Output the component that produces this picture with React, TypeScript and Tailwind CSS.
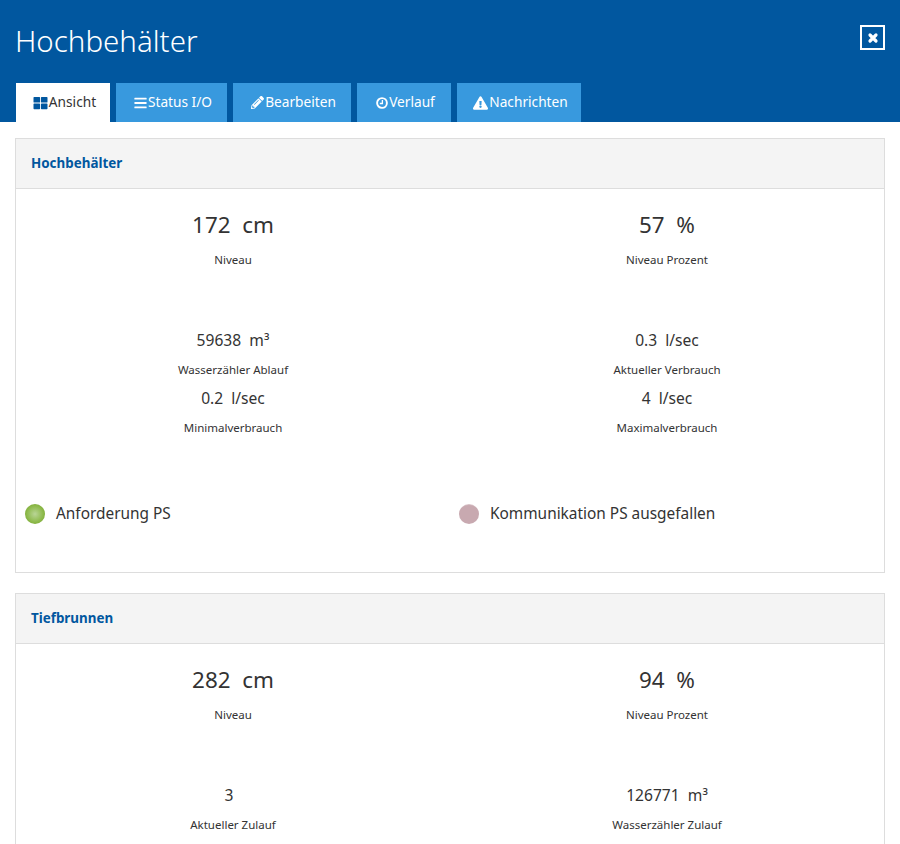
import { FaExclamationTriangle, FaPencilAlt, FaBars, FaThLarge } from 'react-icons/fa';
import type { ReactNode } from 'react';

const ClockIcon = () => (
  <svg viewBox="0 0 12 12" className="w-[12px] h-[12px]" fill="none" stroke="currentColor">
    <circle cx="6" cy="6" r="4.9" strokeWidth="1.9" />
    <path d="M6.4 3v3.5H3.8" strokeWidth="1.3" />
  </svg>
);

const CloseIcon = () => (
  <svg viewBox="0 0 12 12" className="w-[12px] h-[12px]" fill="none" stroke="currentColor">
    <path d="M3 3l6 6M9 3l-6 6" strokeWidth="3.2" strokeLinecap="round" />
  </svg>
);

const tabs = [
  { label: 'Ansicht', icon: <FaThLarge className="w-[15px] h-[14px]" />, width: 'w-[94px]', active: true },
  { label: 'Status I/O', icon: <FaBars className="w-[13px] h-[14px]" />, width: 'w-[111px]' },
  { label: 'Bearbeiten', icon: <FaPencilAlt className="w-[13px] h-[13px]" />, width: 'w-[118px]' },
  { label: 'Verlauf', icon: <ClockIcon />, width: 'w-[94px]' },
  { label: 'Nachrichten', icon: <FaExclamationTriangle className="w-[15px] h-[14px]" />, width: 'w-[124px]' },
];

const Big = ({ value, unit, label }: { value: string; unit: string; label: string }) => (
  <div className="h-[139px] text-center">
    <div className="h-[44px] pt-[17px] text-[22.4px] leading-[38px]">
      {value}&nbsp; {unit}
    </div>
    <div className="mt-[19px] text-[11.5px] leading-[16px]">{label}</div>
  </div>
);

const Small = ({ value, unit, label }: { value: string; unit?: string; label: string }) => (
  <div className="h-[58px] text-center">
    <div className="h-[24px] text-[15.6px] leading-[24px]">
      {value}&nbsp;&nbsp;{unit}
    </div>
    <div className="mt-[9px] text-[11.5px] leading-[18px]">{label}</div>
  </div>
);

const Led = ({ on, label }: { on?: boolean; label: string }) => (
  <div className="flex items-center pl-[9px] h-[24px]">
    <span
      className={
        on
          ? 'w-[20px] h-[20px] rounded-full bg-[radial-gradient(circle,#b9d596_0%,#8fbb4e_55%,#7cab34_80%,#a8c97c_100%)]'
          : 'w-[20px] h-[20px] rounded-full bg-[radial-gradient(circle_at_50%_62%,#c8a9b0_0%,#c8a9b0_68%,#f0e6e8_86%,#c8a9b0_100%)]'
      }
    />
    <span className="ml-[11px] text-[15.4px] leading-[24px]">{label}</span>
  </div>
);

const Panel = ({ title, className, children }: { title: string; className: string; children: ReactNode }) => (
  <section className={`border border-[#dddddd] ${className}`}>
    <h2 className="h-[50px] bg-[#f4f4f4] border-b border-[#dddddd] pl-[15px] text-[13.4px] font-bold leading-[49px] text-[#01579f]">
      {title}
    </h2>
    {children}
  </section>
);

export default function App() {
  return (
    <div className="w-[900px] h-[844px] overflow-hidden bg-white text-[#333333] font-['Noto_Sans',sans-serif]">
      <header className="h-[122px] bg-[#01579f] text-white relative">
        <h1 className="pl-[15px] pt-[20px] h-[83px] text-[29.5px] font-light leading-[42px]">Hochbehälter</h1>
        <button className="absolute top-[25px] left-[860px] w-[25px] h-[25px] border-2 border-white flex items-center justify-center">
          <CloseIcon />
        </button>
        <nav className="flex gap-[6px] pl-[16px]">
          {tabs.map((tab) => (
            <div
              key={tab.label}
              className={`${tab.width} h-[39px] pl-[3px] flex items-center justify-center gap-[1px] text-[13.7px] ${
                tab.active ? 'bg-white text-[#01579f]' : 'bg-[#3899de] text-white'
              }`}
            >
              {tab.icon}
              <span className={tab.active ? 'text-[#333333]' : ''}>{tab.label}</span>
            </div>
          ))}
        </nav>
      </header>
      <main className="px-[15px] pt-[16px]">
        <Panel title="Hochbehälter" className="h-[435px]">
          <div className="grid grid-cols-2">
            <Big value="172" unit="cm" label="Niveau" />
            <Big value="57" unit="%" label="Niveau Prozent" />
            <Small value="59638" unit="m³" label="Wasserzähler Ablauf" />
            <Small value="0.3" unit="l/sec" label="Aktueller Verbrauch" />
            <Small value="0.2" unit="l/sec" label="Minimalverbrauch" />
            <Small value="4" unit="l/sec" label="Maximalverbrauch" />
          </div>
          <div className="grid grid-cols-2 mt-[58px]">
            <Led on label="Anforderung PS" />
            <Led label="Kommunikation PS ausgefallen" />
          </div>
        </Panel>
        <Panel title="Tiefbrunnen" className="mt-[20px] h-[300px]">
          <div className="grid grid-cols-2">
            <Big value="282" unit="cm" label="Niveau" />
            <Big value="94" unit="%" label="Niveau Prozent" />
            <Small value="3" label="Aktueller Zulauf" />
            <Small value="126771" unit="m³" label="Wasserzähler Zulauf" />
          </div>
        </Panel>
      </main>
    </div>
  );
}
